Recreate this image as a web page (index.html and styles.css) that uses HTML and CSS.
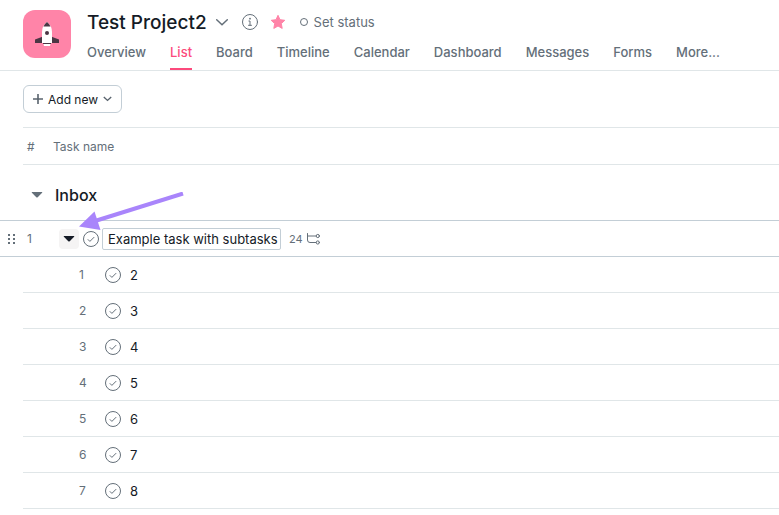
FILE: index.html
```html
<!DOCTYPE html>
<html lang="en">
  <head>
    <meta charset="UTF-8" />
    <meta name="viewport" content="width=device-width, initial-scale=1.0" />
    <title>Test Project2</title>
    <link rel="stylesheet" href="styles.css">
  </head>

  <body>
    <!-- Shared icons -->
    <svg class="sprite" aria-hidden="true">
      <symbol id="icon-check" viewBox="0 0 16 16">
        <circle cx="8" cy="8" r="7.5" />
        <path d="M4.8 8.3l2.1 2.1 4.3-4.3" />
      </symbol>
      <symbol id="icon-triangle" viewBox="0 0 12 6">
        <path d="M1.2 0h9.6q1 0 .3.8L6.7 5.3q-.7.6-1.4 0L.9.8Q.2 0 1.2 0z" />
      </symbol>
    </svg>

    <header class="header">
      <div class="project-icon">
        <svg width="24" height="24" viewBox="0 0 24 24" aria-hidden="true">
          <path d="M8 14.500L0 17.500V21h8zM16 14.500L24 17.500V21h-8z" fill="#4a3644" />
          <path d="M12 0Q17 4 17 10V21H7V10Q7 4 12 0z" fill="#fff" />
          <path d="M12 0Q14.500 2 15.500 4.500h-7Q9.500 2 12 0z" fill="#4a3644" />
          <circle cx="12" cy="11" r="2" fill="#4a3644" />
          <path d="M8 21h8v1H8z" fill="#4a3644" />
          <path d="M8.500 22h7l-.5 2H9z" fill="#fff" />
        </svg>
      </div>

      <div class="header-main">
        <div class="title-row">
          <h1>Test Project2</h1>
          <button class="icon-btn chevron-btn" aria-label="Project actions">
            <svg class="line" width="12" height="7" viewBox="0 0 12 7"><path d="M.7.8L6 5.800 11.300.8" /></svg>
          </button>
          <button class="icon-btn info-btn" aria-label="Project details">
            <svg class="line-thin" width="16" height="16" viewBox="0 0 16 16">
              <circle cx="8" cy="8" r="7.500" />
              <path d="M6.900 7H8v4.300M6.500 11.300h3" />
              <circle class="dot" cx="8" cy="4.700" r=".9" />
            </svg>
          </button>
          <button class="icon-btn star-btn" aria-label="Starred">
            <svg width="16" height="16" viewBox="0 0 16 16">
              <path d="M8 1.300l2 4.400 4.800.6-3.500 3.300.9 4.800L8 12l-4.200 2.400.9-4.800L1.200 6.300 6 5.700z" fill="#ff84a8" stroke="#ff84a8" stroke-linejoin="round" />
            </svg>
          </button>
          <button class="status-btn"><span class="status-dot"></span>Set status</button>
        </div>

        <nav class="tabs">
          <a href="#">Overview</a>
          <a href="#" class="active">List</a>
          <a href="#">Board</a>
          <a href="#">Timeline</a>
          <a href="#">Calendar</a>
          <a href="#">Dashboard</a>
          <a href="#">Messages</a>
          <a href="#">Forms</a>
          <a href="#">More...</a>
        </nav>
      </div>
    </header>

    <div class="toolbar">
      <button class="add-btn">
        <svg width="10" height="10" viewBox="0 0 10 10"><path d="M5 0v10M0 5h10" stroke-width="1.600" /></svg>
        Add new
        <svg width="9" height="6" viewBox="0 0 9 6"><path d="M.8 1l3.700 3.400L8.200 1" stroke-width="1.400" /></svg>
      </button>
    </div>

    <main class="list">
      <table class="tasks">
        <thead>
          <tr>
            <td class="gutter"></td>
            <th class="col-num">#</th>
            <th>Task name</th>
          </tr>
        </thead>
        <tbody>
          <tr class="section">
            <td class="gutter"></td>
            <td colspan="2">
              <div class="section-title">
                <button class="icon-btn" aria-label="Collapse section">
                  <svg width="12" height="6"><use href="#icon-triangle" /></svg>
                </button>
                <h2>Inbox</h2>
              </div>
            </td>
          </tr>
          <tr class="task">
            <td class="gutter">
              <svg class="grip" width="7" height="10" viewBox="0 0 7 10">
                <path d="M0 0h2v2H0zM5 0h2v2H5zM0 4h2v2H0zM5 4h2v2H5zM0 8h2v2H0zM5 8h2v2H5z" />
              </svg>
            </td>
            <td class="col-num">1</td>
            <td>
              <div class="task-cell">
                <button class="icon-btn toggle" aria-label="Collapse subtasks">
                  <svg width="12" height="6"><use href="#icon-triangle" /></svg>
                </button>
                <button class="icon-btn check" aria-label="Mark complete">
                  <svg width="16" height="16"><use href="#icon-check" /></svg>
                </button>
                <input class="task-input" type="text" value="Example task with subtasks" aria-label="Task name" />
                <span class="count">24</span>
                <svg class="line-thin" width="13" height="12" viewBox="0 0 13 12">
                  <path d="M.5.500V7q0 2.500 2.500 2.500h6M.5 3h8.500" />
                  <circle cx="10.800" cy="3" r="1.600" />
                  <circle cx="10.800" cy="9.500" r="1.600" />
                </svg>
              </div>
            </td>
          </tr>
          <tr class="subtask">
            <td class="gutter"></td>
            <td colspan="2"><div class="subtask-cell"><span class="num">1</span><button class="icon-btn check" aria-label="Mark complete"><svg width="16" height="16"><use href="#icon-check" /></svg></button><span>2</span></div></td>
          </tr>
          <tr class="subtask">
            <td class="gutter"></td>
            <td colspan="2"><div class="subtask-cell"><span class="num">2</span><button class="icon-btn check" aria-label="Mark complete"><svg width="16" height="16"><use href="#icon-check" /></svg></button><span>3</span></div></td>
          </tr>
          <tr class="subtask">
            <td class="gutter"></td>
            <td colspan="2"><div class="subtask-cell"><span class="num">3</span><button class="icon-btn check" aria-label="Mark complete"><svg width="16" height="16"><use href="#icon-check" /></svg></button><span>4</span></div></td>
          </tr>
          <tr class="subtask">
            <td class="gutter"></td>
            <td colspan="2"><div class="subtask-cell"><span class="num">4</span><button class="icon-btn check" aria-label="Mark complete"><svg width="16" height="16"><use href="#icon-check" /></svg></button><span>5</span></div></td>
          </tr>
          <tr class="subtask">
            <td class="gutter"></td>
            <td colspan="2"><div class="subtask-cell"><span class="num">5</span><button class="icon-btn check" aria-label="Mark complete"><svg width="16" height="16"><use href="#icon-check" /></svg></button><span>6</span></div></td>
          </tr>
          <tr class="subtask">
            <td class="gutter"></td>
            <td colspan="2"><div class="subtask-cell"><span class="num">6</span><button class="icon-btn check" aria-label="Mark complete"><svg width="16" height="16"><use href="#icon-check" /></svg></button><span>7</span></div></td>
          </tr>
          <tr class="subtask">
            <td class="gutter"></td>
            <td colspan="2"><div class="subtask-cell"><span class="num">7</span><button class="icon-btn check" aria-label="Mark complete"><svg width="16" height="16"><use href="#icon-check" /></svg></button><span>8</span></div></td>
          </tr>
        </tbody>
      </table>

      <!-- Arrow pointing at the subtask toggle -->
      <svg class="pointer" width="106" height="40" viewBox="0 0 106 40" aria-hidden="true">
        <path d="M104 1.500L16 29" fill="none" stroke="#a985fb" stroke-width="4" />
        <path d="M0 34.500L15.500 19.500 21.500 38z" fill="#a985fb" />
      </svg>
    </main>
  </body>
</html>
```

FILE: styles.css
```css
* {
  box-sizing: border-box;
}

body {
  font-family: Inter, "Liberation Sans", sans-serif;
  font-size: 13px;
  margin: 0;
  color: #151b26;
  background: #fff;
}

button {
  font: inherit;
  color: inherit;
  cursor: pointer;
}

svg {
  display: block;
}

.sprite {
  position: absolute;
  width: 0;
  height: 0;
}

.icon-btn {
  display: flex;
  align-items: center;
  justify-content: center;
  background: none;
  border: none;
  padding: 0;
}

.line,
.line-thin {
  fill: none;
  stroke: #646f79;
  stroke-linecap: round;
}

.line {
  stroke-width: 1.5;
}

.dot {
  fill: #646f79;
  stroke: none;
}

/* Header */
.header {
  display: flex;
  gap: 16px;
  padding: 10px 23px 0;
  border-bottom: 1px solid #e0e6e8;
}

.project-icon {
  display: flex;
  align-items: center;
  justify-content: center;
  flex-shrink: 0;
  width: 48px;
  height: 48px;
  border-radius: 12px;
  background: #ff84a8;
}

.title-row {
  display: flex;
  align-items: center;
  height: 24px;
}

h1 {
  margin: 0;
  font-size: 19px;
  font-weight: 500;
}

.chevron-btn {
  margin-left: 9px;
}

.info-btn {
  margin-left: 14px;
}

.star-btn {
  margin-left: 12px;
}

.status-btn {
  display: flex;
  align-items: center;
  gap: 6px;
  margin-left: 14px;
  padding: 0;
  background: none;
  border: none;
  color: #646f79;
}

.status-dot {
  width: 8px;
  height: 8px;
  border: 1px solid #646f79;
  border-radius: 50%;
}

.tabs {
  display: flex;
  gap: 24px;
  height: 36px;
}

.tabs a {
  padding-top: 10px;
  line-height: 16px;
  font-weight: 500;
  color: #646f79;
  text-decoration: none;
  white-space: nowrap;
}

.tabs .active {
  color: #fc4a7c;
  border-bottom: 2px solid #fc4a7c;
}

/* Toolbar */
.toolbar {
  padding: 14px 23px;
}

.add-btn {
  display: flex;
  align-items: center;
  gap: 5px;
  height: 28px;
  padding: 0 9px;
  font-size: 12px;
  background: #fff;
  border: 1px solid #c3ced6;
  border-radius: 6px;
}

.add-btn path {
  fill: none;
  stroke: #59636d;
}

/* Task list */
.list {
  position: relative;
}

.tasks {
  width: 100%;
  table-layout: fixed;
  border-collapse: separate;
  border-spacing: 0;
}

.tasks td,
.tasks th {
  padding: 0;
  text-align: left;
}

.tasks .gutter {
  width: 23px;
}

.tasks .col-num {
  width: 30px;
  padding-left: 4px;
  color: #646f79;
  font-size: 12px;
}

.tasks th {
  height: 38px;
  border-top: 1px solid #e0e6e8;
  border-bottom: 1px solid #e0e6e8;
  font-size: 12px;
  font-weight: 400;
  color: #646f79;
}

.section td {
  height: 55px;
}

.section-title {
  display: flex;
  align-items: center;
  gap: 12px;
  padding: 5px 0 0 8px;
  fill: #646f79;
}

h2 {
  margin: 0;
  font-size: 16px;
  font-weight: 500;
}

.task td {
  height: 37px;
  border-top: 1px solid #c3ced6;
  border-bottom: 1px solid #c3ced6;
}

.grip {
  margin-left: 8px;
  fill: #646f79;
}

.task-cell {
  display: flex;
  align-items: center;
  padding-left: 6px;
}

.toggle {
  width: 20px;
  height: 20px;
  border-radius: 4px;
  background: #f5f4f4;
  fill: #151b26;
}

.check {
  fill: none;
  stroke: #646f79;
}

.task .check {
  margin: 0 3px 0 4px;
}

.task-input {
  width: 179px;
  height: 22px;
  padding: 0 0 0 5px;
  font: inherit;
  color: inherit;
  border: 1px solid #c3ced6;
  border-radius: 2px;
}

.count {
  margin: 0 4px 0 8px;
  font-size: 11px;
  color: #646f79;
}

.subtask td {
  height: 36px;
}

.subtask td + td {
  border-bottom: 1px solid #e0e6e8;
}

.subtask-cell {
  display: flex;
  align-items: center;
  gap: 9px;
  padding-left: 56px;
}

.num {
  width: 17px;
  font-size: 12px;
  color: #646f79;
}

.pointer {
  position: absolute;
  top: 65px;
  left: 79px;
}
```
